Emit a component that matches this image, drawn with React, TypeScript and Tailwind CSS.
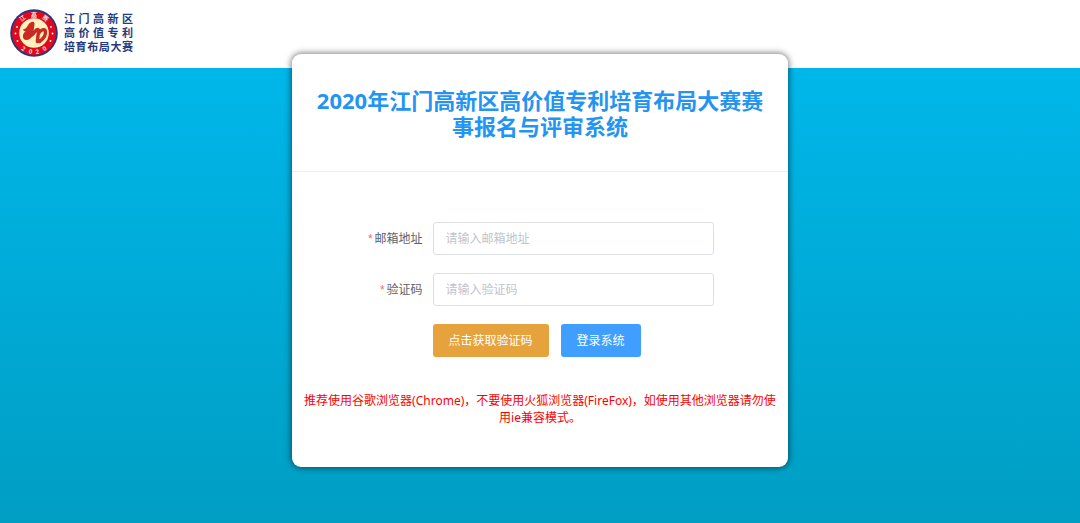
import React, { useState } from 'react'

const font = "font-['Noto_Sans','Noto_Sans_CJK_SC',sans-serif]"

function Emblem() {
  return (
    <svg viewBox="0 0 48 48" className="size-12 shrink-0" role="img" aria-label="江高赛 2020">
      <defs>
        <path id="ringTop" d="M7.500 24a16.500 16.500 0 0 1 33 0" />
        <path id="ringBottom" d="M3 24a21 21 0 0 0 42 0" />
      </defs>
      <circle cx="24" cy="24" r="23.8" fill="#2b3582" />
      <circle cx="24" cy="24" r="22" fill="#e1091c" />
      <circle cx="24" cy="24" r="14.8" fill="#fff3bd" />
      <path
        fill="#cb2a22"
        d="M12.800 20.500c2.500-.3 3.800-1.700 5-4 1.200-2.300 3-3.700 5-3.700 1.300 0 1.900.9 1.700 2.400l-.9 7.300c-.4 4.500-2.600 8-6.800 8.500-2.500.2-4-1.500-3.900-4 .1-2 1-3.500 2.800-4.500-1.300-.2-2.300-.8-2.900-2z"
      />
      <path
        fill="none"
        stroke="#cb2a22"
        strokeWidth="3.400"
        strokeLinecap="round"
        strokeLinejoin="round"
        d="M22 26c2.500-2 3.500-5.500 5.500-5.500 1.500 0 1 2.500.7 4.500l-.9 7.500M28.500 24.500c1.500-3 6-5.500 6.800-2.500.7 3.500-1.500 7.500-5.800 10.500"
      />
      {['29%', '50%', '71%'].map((offset, i) => (
        <text key={offset} fill="#fff" fontSize="6" fontWeight="500" textAnchor="middle">
          <textPath href="#ringTop" startOffset={offset}>
            {'江高赛'[i]}
          </textPath>
        </text>
      ))}
      {['31%', '44%', '56%', '69%'].map((offset, i) => (
        <text key={offset} fill="#fff" fontSize="6" fontWeight="600" textAnchor="middle">
          <textPath href="#ringBottom" startOffset={offset}>
            {'2020'[i]}
          </textPath>
        </text>
      ))}
      <g fill="#fff">
        <circle cx="5.500" cy="24.500" r=".9" />
        <circle cx="7" cy="18" r=".9" />
        <circle cx="7.500" cy="32" r=".9" />
        <circle cx="42.500" cy="24.500" r=".9" />
        <circle cx="41" cy="18" r=".9" />
        <circle cx="40.500" cy="32" r=".9" />
      </g>
    </svg>
  )
}

function Field({
  id,
  label,
  value,
  onChange,
}: {
  id: string
  label: string
  value: string
  onChange: (value: string) => void
}) {
  return (
    <div className="flex items-center gap-2.5">
      <label htmlFor={id} className="w-[131px] shrink-0 text-right text-[#606266]">
        <span className="mr-0.5 font-['Liberation_Sans',sans-serif] text-[#f56c6c]">*</span>
        {label}
      </label>
      <input
        id={id}
        value={value}
        onChange={(e) => onChange(e.target.value)}
        placeholder={`请输入${label}`}
        className="h-[33px] min-w-0 flex-1 rounded-[3px] border border-[#dcdfe6] px-3 outline-none placeholder:text-[#c0c4cc] focus:border-[#409eff]"
      />
    </div>
  )
}

export default function App() {
  const [email, setEmail] = useState('')
  const [code, setCode] = useState('')

  return (
    <div className={`flex min-h-screen flex-col bg-white ${font}`}>
      <header className="flex h-[68px] items-center gap-1.5 px-2.5 pb-0.5">
        <Emblem />
        <div className="w-[69px] text-[11px] leading-[14px] font-bold text-[#233a80]">
          <p className="[text-align-last:justify]">江门高新区</p>
          <p className="[text-align-last:justify]">高价值专利</p>
          <p className="[text-align-last:justify]">培育布局大赛</p>
        </div>
      </header>

      <main className="flex-1 bg-linear-to-b from-[#00b7ea] to-[#009ec3] pb-14">
        <section className="relative mx-auto -mt-3.5 w-[46%] min-w-[480px] rounded-[9px] bg-white pb-[41px] text-xs shadow-[0_0_6px_1px_rgba(0,0,0,0.5)]">
          <h1 className="border-b border-[#ebeef5] px-4 pt-[33px] pb-8 text-center text-[22px] leading-[26px] font-bold text-[#2494f2]">
            2020年江门高新区高价值专利培育布局大赛赛事报名与评审系统
          </h1>

          <form
            onSubmit={(e) => e.preventDefault()}
            className="flex flex-col gap-[18px] pt-[50px] pr-[74px]"
          >
            <Field id="email" label="邮箱地址" value={email} onChange={setEmail} />
            <Field id="code" label="验证码" value={code} onChange={setCode} />
            <div className="flex gap-3 pl-[141px] text-white">
              <button type="button" className="h-[33px] rounded-[3px] bg-[#e6a23c] px-4">
                点击获取验证码
              </button>
              <button type="submit" className="h-[33px] rounded-[3px] bg-[#409eff] px-4">
                登录系统
              </button>
            </div>
          </form>

          <p className="mt-[35px] px-3 text-center leading-[17px] text-[#ff0000]">
            推荐使用谷歌浏览器(Chrome)，不要使用火狐浏览器(FireFox)，如使用其他浏览器请勿使用ie兼容模式。
          </p>
        </section>
      </main>
    </div>
  )
}
